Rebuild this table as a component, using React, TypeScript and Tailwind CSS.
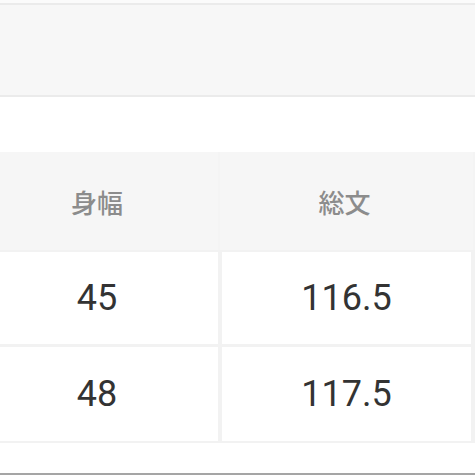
import React from 'react';

const ROWS = [
  ['45', '116.5'],
  ['48', '117.5'],
];

const App: React.FC = () => {
  return (
    <div className="w-[475px] h-[475px] bg-white overflow-hidden flex flex-col">
      <div className="h-[3px] bg-[#fbfbfb]" />
      <div className="h-[94px] bg-[#f7f7f7] border-y-2 border-[#ebebeb]" />
      <div className="h-[55px]" />

      <div className="-ml-6 w-[499px] bg-[#f4f4f4] grid grid-cols-[242px_253px] gap-x-[2px]">
        <div className="h-[98px] bg-[#f6f6f6] flex items-center justify-center text-[26px] font-medium text-[#8c8c8c] font-['Noto_Sans_CJK_JP',sans-serif]">
          身幅
        </div>
        <div className="h-[98px] bg-[#f6f6f6] flex items-center justify-center pr-[4px] text-[26px] font-medium text-[#8c8c8c] font-['Noto_Sans_CJK_JP',sans-serif]">
          総文
        </div>
      </div>

      <div className="-ml-6 w-[499px] bg-[#f2f2f2] grid grid-cols-[242px_249px] gap-x-[4px] pr-[4px] pb-[2px]">
        {ROWS.map((row, i) => (
          <React.Fragment key={i}>
            <div className={`${i === 0 ? 'mt-[2px] h-[92px]' : 'mt-[3px] h-[94px]'} bg-white flex items-center justify-center text-[36px] text-[#333] font-['Roboto',sans-serif]`}>
              {row[0]}
            </div>
            <div className={`${i === 0 ? 'mt-[2px] h-[92px]' : 'mt-[3px] h-[94px]'} bg-white flex items-center justify-center text-[36px] text-[#333] font-['Roboto',sans-serif]`}>
              {row[1]}
            </div>
          </React.Fragment>
        ))}
      </div>

      <div className="flex-1 border-b-2 border-[#a5a5a5]" />
    </div>
  );
};

export default App;
